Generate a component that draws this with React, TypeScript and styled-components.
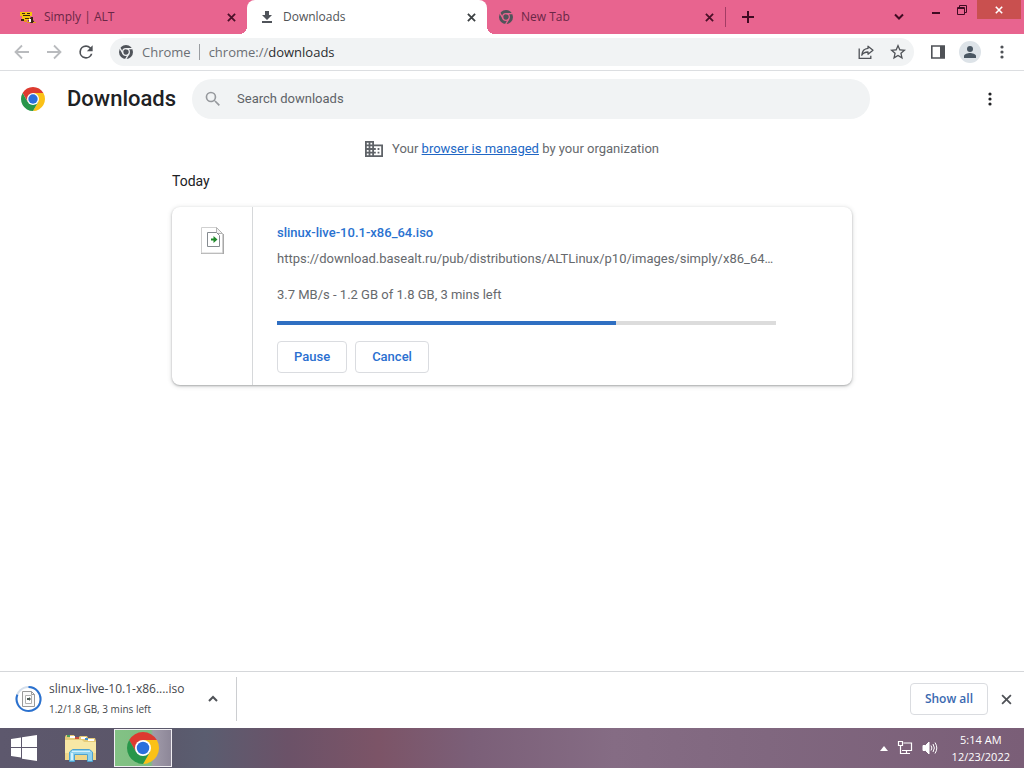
import React from 'react';
import styled, { createGlobalStyle, css } from 'styled-components';

const ui = '"Open Sans", "Noto Sans", sans-serif';
const roboto = 'Roboto, "Liberation Sans", sans-serif';

const GlobalStyle = createGlobalStyle`
  *, *::before, *::after { box-sizing: border-box; }
  body { margin: 0; background: #fff; font-family: ${roboto}; color: #202124; }
  button { font: inherit; color: inherit; background: none; border: 0; padding: 0; margin: 0; cursor: pointer; }
  svg { display: block; flex: none; }
`;

const Page = styled.div`
  display: flex;
  flex-direction: column;
  min-height: 100vh;
`;

/* ---------- Tab strip ---------- */

const TabStrip = styled.div`
  display: flex;
  height: 34px;
  background: #e8648f;
  font-family: ${ui};
`;

const TabItem = styled.div<{ $active?: boolean; $first?: boolean }>`
  position: relative;
  display: flex;
  align-items: center;
  flex: 0 1 ${p => (p.$first ? 247 : p.$active ? 240 : 238)}px;
  min-width: 0;
  padding: 0 10px 0 ${p => (p.$first ? 19 : 12)}px;
  gap: 8px;
  color: ${p => (p.$active ? '#505357' : '#6a2746')};
  ${p =>
    p.$active &&
    css`
      background: #fff;
      border-radius: 8px 8px 0 0;
      &::before,
      &::after {
        content: '';
        position: absolute;
        bottom: 0;
        width: 8px;
        height: 8px;
      }
      &::before {
        left: -8px;
        background: radial-gradient(circle at 0 0, transparent 8px, #fff 8px);
      }
      &::after {
        right: -8px;
        background: radial-gradient(circle at 100% 0, transparent 8px, #fff 8px);
      }
    `}
`;

const TabTitle = styled.span`
  flex: 1;
  font-size: 12px;
  line-height: 16px;
  white-space: nowrap;
  overflow: hidden;
`;

const TabClose = styled.button<{ $dark?: boolean }>`
  display: grid;
  place-items: center;
  width: 12px;
  height: 16px;
  color: ${p => (p.$dark ? '#3c4043' : '#4a1028')};
`;

const TabDivider = styled.span`
  align-self: center;
  width: 1px;
  height: 20px;
  background: #a33c64;
`;

const StripButton = styled.button`
  display: grid;
  place-items: center;
  align-self: center;
  width: 28px;
  height: 28px;
  margin-left: 8px;
  color: #3f0b22;
`;

const Spacer = styled.div`
  flex: 1;
`;

const WindowControls = styled.div`
  display: flex;
  margin: 0 3px 0 10px;
`;

const WindowButton = styled.button<{ $close?: boolean }>`
  display: grid;
  place-items: center;
  width: ${p => (p.$close ? 44 : 26)}px;
  height: 19px;
  margin-left: ${p => (p.$close ? 2 : 0)}px;
  color: ${p => (p.$close ? '#fff' : '#3f0b22')};
  background: ${p => (p.$close ? '#c9504f' : 'transparent')};
`;

/* ---------- Toolbar ---------- */

const Toolbar = styled.div`
  display: flex;
  align-items: center;
  height: 37px;
  padding: 0 12px;
  border-bottom: 1px solid #dcdee1;
  font-family: ${ui};
`;

const IconButton = styled.button<{ $muted?: boolean }>`
  display: grid;
  place-items: center;
  flex: none;
  width: 32px;
  height: 28px;
  color: ${p => (p.$muted ? '#b9bbbe' : '#4f5257')};
`;

const NavGroup = styled.div`
  display: flex;
  margin: 0 8px 0 -6px;
`;

const AddressBar = styled.div`
  display: flex;
  align-items: center;
  flex: 1;
  min-width: 0;
  height: 28px;
  padding: 0 0 0 9px;
  border-radius: 14px;
  background: #f1f3f4;
  font-size: 13px;
  line-height: 20px;
  color: #6b6f74;
`;

const SiteChip = styled.button`
  display: flex;
  align-items: center;
  gap: 9px;
  padding-right: 8px;
`;

const AddressDivider = styled.span`
  width: 1px;
  height: 16px;
  margin-right: 9px;
  background: #9a9da1;
`;

const AddressText = styled.div`
  flex: 1;
  outline: 0;
  white-space: nowrap;
  strong { font-weight: 400; color: #2b2d30; }
`;

const ToolGroup = styled.div`
  display: flex;
  margin: 0 -6px 0 8px;
`;

const Avatar = styled.span`
  display: grid;
  place-items: center;
  width: 22px;
  height: 22px;
  border-radius: 50%;
  background: #dde3e8;
`;

/* ---------- Downloads page ---------- */

const Header = styled.header`
  display: flex;
  align-items: center;
  height: 56px;
  padding: 0 18px 0 21px;
`;

const Title = styled.h1`
  margin: 0 16px 0 22px;
  font-size: 22px;
  line-height: 32px;
  font-weight: 500;
`;

const SearchField = styled.label`
  display: flex;
  align-items: center;
  gap: 15px;
  flex: 0 1 678px;
  height: 40px;
  padding: 0 12px;
  border-radius: 20px;
  background: #f1f3f4;
  color: #96999d;
`;

const SearchInput = styled.input`
  flex: 1;
  min-width: 0;
  border: 0;
  padding: 0;
  outline: 0;
  background: transparent;
  font: 13px/20px ${roboto};
  color: #202124;
  &::placeholder { color: #5f6368; opacity: 1; }
`;

const Main = styled.main`
  flex: 1;
  display: flex;
  flex-direction: column;
`;

const ManagedNote = styled.p`
  display: flex;
  align-items: center;
  justify-content: center;
  gap: 9px;
  margin: 12px 0 0;
  font-size: 13px;
  line-height: 20px;
  color: #66696d;
  a { color: #2167c5; }
`;

const List = styled.section`
  width: 100%;
  max-width: 680px;
  margin: 0 auto;
`;

const DateHeading = styled.h2`
  margin: 12px 0 16px;
  font-size: 14px;
  line-height: 20px;
  font-weight: 400;
`;

const Card = styled.article`
  display: flex;
  min-height: 178px;
  border-radius: 8px;
  background: #fff;
  box-shadow: 0 1px 2px rgba(60, 64, 67, 0.35), 0 1px 4px 1px rgba(60, 64, 67, 0.15);
`;

const FileCell = styled.div`
  display: flex;
  justify-content: center;
  flex: 0 0 81px;
  padding-top: 19px;
  border-right: 1px solid #d6d8da;
`;

const Details = styled.div`
  flex: 1;
  min-width: 0;
  padding: 16px 76px 12px 24px;
  font-size: 13px;
  line-height: 20px;
  color: #66696d;
`;

const FileLink = styled.a`
  display: block;
  font-weight: 500;
  color: #2a72d0;
  text-decoration: none;
`;

const SourceUrl = styled.div`
  margin-top: 6px;
  white-space: nowrap;
  overflow: hidden;
  text-overflow: ellipsis;
`;

const Status = styled.div`
  margin-top: 16px;
`;

const Progress = styled.progress`
  display: block;
  appearance: none;
  width: 100%;
  height: 4px;
  margin: 16px 0;
  border: 0;
  &::-webkit-progress-bar { background: #dcdcdc; }
  &::-webkit-progress-value { background: #2f6fc2; }
`;

const Actions = styled.div`
  display: flex;
  gap: 8px;
`;

const OutlineButton = styled.button`
  height: 32px;
  padding: 0 16px;
  border: 1px solid #dadce0;
  border-radius: 4px;
  font-size: 13px;
  line-height: 20px;
  font-weight: 500;
  color: #2a6fd0;
`;

/* ---------- Download shelf ---------- */

const Shelf = styled.footer`
  display: flex;
  align-items: center;
  height: 57px;
  padding: 0 9px 2px 15px;
  border-top: 1px solid #d5d7da;
  font-family: ${ui};
`;

const ShelfItem = styled.button`
  display: flex;
  align-items: center;
  gap: 7px;
  min-width: 182px;
  text-align: left;
`;

const ShelfName = styled.div`
  font-size: 12px;
  line-height: 20px;
  color: #45484c;
`;

const ShelfStatus = styled.div`
  font-size: 10px;
  line-height: 20px;
  color: #45484c;
`;

const ShelfDivider = styled.span`
  width: 1px;
  height: 44px;
  margin-left: 7px;
  background: #ccced1;
`;

const ShowAll = styled(OutlineButton)`
  padding: 0 14px;
  margin-right: 9px;
  font-size: 12px;
  font-weight: 600;
  color: #3a69b0;
`;

const CloseShelf = styled.button`
  display: grid;
  place-items: center;
  width: 18px;
  height: 24px;
  color: #4f5257;
`;

/* ---------- Taskbar ---------- */

const Taskbar = styled.nav`
  display: flex;
  align-items: center;
  height: 40px;
  padding: 0 14px 0 0;
  background: linear-gradient(90deg, #5d586d 0%, #5b5669 14%, #5a5d70 20%, #6b5268 28%, #7c5467 37%, #7b5f78 46%, #856c84 60%, #80677f 75%, #7a5e77 100%);
  color: #fff;
  font-family: ${ui};
`;

const TaskButton = styled.button<{ $running?: boolean }>`
  display: grid;
  place-items: center;
  width: ${p => (p.$running ? 58 : 48)}px;
  height: 38px;
  ${p =>
    p.$running &&
    css`
      margin-left: 9px;
      border: 1px solid #f0eef2;
      background: linear-gradient(90deg, #83c285 0%, #7dbd81 64%, #a19baa 68%, #8d8798 100%);
    `}
`;

const Explorer = styled(TaskButton)`
  margin-left: 9px;
`;

const Tray = styled.div`
  display: flex;
  align-items: center;
  gap: 9px;
  margin-right: 14px;
`;

const Clock = styled.time`
  font-size: 11px;
  line-height: 17px;
  text-align: center;
`;

/* ---------- Icons ---------- */

const Cross = ({ size = 9, width = 2 }: { size?: number; width?: number }) => (
  <svg width={size} height={size} viewBox="0 0 10 10" stroke="currentColor" strokeWidth={width} fill="none">
    <path d="M1 1l8 8M9 1l-8 8" />
  </svg>
);

const ChromeLogo = ({ size }: { size: number }) => (
  <svg width={size} height={size} viewBox="2 2 44 44">
    <path fill="#dd3b30" d="M24 13H43.05A22 22 0 0 0 4.95 13L14.47 29.5 24 24z" />
    <path fill="#fbc117" d="M43.05 13A22 22 0 0 1 24 46L33.53 29.5 24 13z" />
    <path fill="#28964a" d="M24 46A22 22 0 0 1 4.95 13L14.47 29.5 24 32 33.53 29.5z" />
    <circle cx="24" cy="24" r="11" fill="#fff" />
    <circle cx="24" cy="24" r="8.6" fill="#2b6fdc" />
  </svg>
);

const ChromeMono = ({ gap }: { gap: string }) => (
  <svg width="14" height="14" viewBox="2 2 44 44">
    <circle cx="24" cy="24" r="22" fill="#50545a" />
    <g fill="none" stroke={gap} strokeWidth="4">
      <path d="M24 13.5H45M33.1 29.2L22.6 47.4M14.9 29.2L4.4 11" />
      <circle cx="24" cy="24" r="10.5" />
    </g>
  </svg>
);

const SimplyFavicon = () => (
  <svg width="17" height="15" viewBox="0 0 17 15">
    <path fill="#f4c20d" d="M1 2h12v4H1zM3 6h8v4H3z" />
    <path fill="#3a2410" d="M3 3h3v1H3zM8 3h3v1H8zM4 5h7v1H4zM2 9h3v2H2zM6 8h4v1H6zM12 7h2v3l2 3h-4l-3-2z" />
    <path fill="#fff" d="M10 9h2v3h-2z" />
    <path fill="#e59a16" d="M5 10h3v2H5zM8 12h3v1H8zM14 12h3v1h-3z" />
  </svg>
);

const DownloadGlyph = () => (
  <svg width="16" height="16" viewBox="0 0 16 16" fill="#50545a">
    <path d="M6 2h4v4h3l-5 5-5-5h3zM3 12h10v2H3z" />
  </svg>
);

const ArrowIcon = ({ flip }: { flip?: boolean }) => (
  <svg width="16" height="16" viewBox="0 0 16 16" fill="none" stroke="currentColor" strokeWidth="1.8">
    <path d={flip ? 'M1 8h13M8 1.5L14.5 8 8 14.5' : 'M15 8H2M8 1.5L1.5 8 8 14.5'} />
  </svg>
);

const ReloadIcon = () => (
  <svg width="20" height="20" viewBox="0 0 24 24" fill="currentColor">
    <path d="M17.65 6.35A7.96 7.96 0 0 0 12 4a8 8 0 1 0 7.73 10h-2.08A6 6 0 1 1 12 6c1.66 0 3.14.69 4.22 1.78L13 11h7V4z" />
  </svg>
);

const ShareIcon = () => (
  <svg width="16" height="16" viewBox="0 0 16 16" fill="none" stroke="currentColor" strokeWidth="1.3">
    <path d="M1.2 4.5v9.8h11.6v-2.5" />
    <path d="M10 2.2l5 4-5 4V8C7 8 5 9 3.8 11.2 4.1 7.5 6.5 4.7 10 4.4z" strokeLinejoin="round" />
  </svg>
);

const StarIcon = () => (
  <svg width="16" height="16" viewBox="2 2 20 20" fill="currentColor">
    <path d="M22 9.24l-7.19-.62L12 2 9.19 8.63 2 9.24l5.46 4.73L5.82 21 12 17.27 18.18 21l-1.63-7.03zM12 15.4l-3.76 2.27 1-4.28-3.32-2.88 4.38-.38L12 6.1l1.71 4.04 4.38.38-3.32 2.88 1 4.28z" />
  </svg>
);

const SidePanelIcon = () => (
  <svg width="14" height="14" viewBox="0 0 14 14">
    <path fill="none" stroke="currentColor" strokeWidth="1.6" d="M.8 1h12.4v12H.8z" />
    <path fill="currentColor" d="M9 1h4.5v12H9z" />
  </svg>
);

const PersonIcon = () => (
  <svg width="12" height="12" viewBox="0 0 12 12" fill="#4a5763">
    <circle cx="6" cy="3" r="3" />
    <path d="M0 12v-2c0-2 4-3 6-3s6 1 6 3v2z" />
  </svg>
);

const DotsIcon = () => (
  <svg width="4" height="14" viewBox="0 0 4 14" fill="currentColor">
    <circle cx="2" cy="2" r="1.6" />
    <circle cx="2" cy="7" r="1.6" />
    <circle cx="2" cy="12" r="1.6" />
  </svg>
);

const PageMenu = styled(IconButton)`
  color: #202124;
`;

const SearchIcon = () => (
  <svg width="18" height="18" viewBox="1 1 22 22" fill="currentColor">
    <path d="M15.5 14h-.79l-.28-.27A6.47 6.47 0 0 0 16 9.5 6.5 6.5 0 1 0 9.5 16c1.61 0 3.09-.59 4.23-1.57l.27.28v.79l5 4.99L20.49 19zm-6 0a4.5 4.5 0 1 1 0-9 4.5 4.5 0 0 1 0 9z" />
  </svg>
);

const BusinessIcon = () => (
  <svg width="18" height="18" viewBox="2 2 20 20" fill="#5f6368">
    <path d="M12 7V3H2v18h20V7zM6 19H4v-2h2zm0-4H4v-2h2zm0-4H4V9h2zm0-4H4V5h2zm4 12H8v-2h2zm0-4H8v-2h2zm0-4H8V9h2zm0-4H8V5h2zm10 12h-8v-2h2v-2h-2v-2h2v-2h-2V9h8zm-2-8h-2v2h2zm0 4h-2v2h2z" />
  </svg>
);

const FileIcon = () => (
  <svg width="25" height="30" viewBox="0 0 25 30">
    <path fill="#a8a8a8" d="M1 28h23V8h-2v19H1z" />
    <path fill="#fff" stroke="#d0d0d0" d="M1.500 1.500h15l6 6v19.500h-21z" />
    <path fill="#f1f1f1" stroke="#b5b5b5" d="M16.500 1.500v6h6z" />
    <path fill="#fff" stroke="#858b90" d="M7.500 6.500h9l3 3v11h-12z" />
    <path fill="#1f8a2b" d="M11 12.500h2.500V10l4 3.500-4 3.500v-2.500H11z" />
  </svg>
);

const ShelfProgress = () => (
  <svg width="27" height="28" viewBox="0 0 27 28">
    <g fill="none" strokeWidth="2">
      <circle cx="13.5" cy="14" r="12" stroke="#d5dfeb" />
      <path stroke="#2a71cf" d="M13.5 2A12 12 0 1 1 2.4 9.500" />
    </g>
    <path fill="#fafafa" stroke="#9a9a9a" d="M7.500 6.500h9l3 3v12h-12z" />
    <path fill="#fff" stroke="#b0b0b0" d="M10.500 10.500h6v8h-6z" />
    <path fill="#4d5b55" d="M12 13h2v-1l2 2-2 2v-1h-2z" />
    <path stroke="#9a9a9a" d="M16.500 6.500v3h3" fill="none" />
  </svg>
);

const WindowsLogo = () => (
  <svg width="26" height="26" viewBox="0 0 26 26" fill="#fff">
    <path d="M0 4l10-1.500V12H0zM11 2.300L26 0v12H11zM0 13h10v9.500L0 21zM11 13h15v13l-15-2.300z" />
  </svg>
);

const FolderIcon = () => (
  <svg width="34" height="30" viewBox="0 0 34 30">
    <path fill="#e6cb78" d="M1 4l1-2h8l1 2h4l1-1h7l1 2h7l1 3v18H1z" />
    <path fill="#4ba05c" d="M3 2h3v2H3z" />
    <path fill="#c8503c" d="M11 4h4v2h-4z" />
    <path fill="#fff" d="M6 3h5v2H6zM17 4h5v2h-5zM24 6h6v2h-6z" />
    <path fill="#3f8fca" d="M21 5h3v2h-3z" />
    <path fill="#f7e7a5" d="M1 7h17l2 2h12v18H1z" />
    <path fill="#efd78a" d="M1 20h31v7H1z" />
    <path fill="#8ed2ef" stroke="#4fa3cf" d="M5.500 28.500V19l3-2.500h17l3 2.500v9.500h-5v-7h-13v7z" />
    <path fill="#d5f1fb" d="M8 18h18v1H8zM7 20h2v7H7z" />
  </svg>
);

const NetworkIcon = () => (
  <svg width="16" height="16" viewBox="0 0 16 16" fill="none" stroke="#fff" strokeWidth="1.2">
    <path d="M6.500 3h8v7.500H5M9.500 10.500V13M6 13.500h7M1.500 1.500h4v4h-4zM3.500 5.500v8H6" />
  </svg>
);

const SpeakerIcon = () => (
  <svg width="16" height="16" viewBox="0 0 16 16" fill="none" stroke="#fff">
    <path fill="#fff" d="M1 5.500h2.500L7 2v12l-3.500-3.500H1z" />
    <path d="M9 5.500q1.800 2.500 0 5M11 4q2.800 4 0 8M13 2.500q3.600 5.500 0 11" />
  </svg>
);

export default function App() {
  return (
    <Page>
      <GlobalStyle />
      <TabStrip>
        <TabItem $first>
          <SimplyFavicon />
          <TabTitle>Simply | ALT</TabTitle>
          <TabClose aria-label="Close tab"><Cross /></TabClose>
        </TabItem>
        <TabItem $active>
          <DownloadGlyph />
          <TabTitle>Downloads</TabTitle>
          <TabClose $dark aria-label="Close tab"><Cross /></TabClose>
        </TabItem>
        <TabItem>
          <ChromeMono gap="#e8648f" />
          <TabTitle>New Tab</TabTitle>
          <TabClose aria-label="Close tab"><Cross /></TabClose>
        </TabItem>
        <TabDivider />
        <StripButton aria-label="New tab">
          <svg width="12" height="12" viewBox="0 0 12 12" stroke="currentColor" strokeWidth="2"><path d="M6 0v12M0 6h12" /></svg>
        </StripButton>
        <Spacer />
        <StripButton aria-label="Search tabs">
          <svg width="10" height="8" viewBox="0 0 10 8" fill="none" stroke="currentColor" strokeWidth="2"><path d="M1 1.5l4 4 4-4" /></svg>
        </StripButton>
        <WindowControls>
          <WindowButton aria-label="Minimize">
            <svg width="8" height="14" viewBox="0 0 8 14" fill="currentColor"><path d="M0 9h8v2H0z" /></svg>
          </WindowButton>
          <WindowButton aria-label="Restore">
            <svg width="10" height="10" viewBox="0 0 10 10" fill="none" stroke="currentColor"><path d="M.5 2.5h7v7h-7zM2.5 2.5v-2h7v7h-2M1 3.5h6" /></svg>
          </WindowButton>
          <WindowButton $close aria-label="Close"><Cross size={8} /></WindowButton>
        </WindowControls>
      </TabStrip>

      <Toolbar>
        <NavGroup>
          <IconButton $muted aria-label="Back"><ArrowIcon /></IconButton>
          <IconButton $muted aria-label="Forward"><ArrowIcon flip /></IconButton>
          <IconButton aria-label="Reload"><ReloadIcon /></IconButton>
        </NavGroup>
        <AddressBar>
          <SiteChip><ChromeMono gap="#f1f3f4" />Chrome</SiteChip>
          <AddressDivider />
          <AddressText role="textbox" aria-label="Address" tabIndex={0}>chrome://<strong>downloads</strong></AddressText>
          <IconButton aria-label="Share"><ShareIcon /></IconButton>
          <IconButton aria-label="Bookmark"><StarIcon /></IconButton>
        </AddressBar>
        <ToolGroup>
          <IconButton aria-label="Side panel"><SidePanelIcon /></IconButton>
          <IconButton aria-label="Profile"><Avatar><PersonIcon /></Avatar></IconButton>
          <IconButton aria-label="Menu"><DotsIcon /></IconButton>
        </ToolGroup>
      </Toolbar>

      <Main>
        <Header>
          <ChromeLogo size={24} />
          <Title>Downloads</Title>
          <SearchField>
            <SearchIcon />
            <SearchInput type="search" placeholder="Search downloads" aria-label="Search downloads" />
          </SearchField>
          <Spacer />
          <PageMenu aria-label="More actions"><DotsIcon /></PageMenu>
        </Header>
        <ManagedNote>
          <BusinessIcon />
          <span>Your <a href="#managed">browser is managed</a> by your organization</span>
        </ManagedNote>
        <List>
          <DateHeading>Today</DateHeading>
          <Card>
            <FileCell><FileIcon /></FileCell>
            <Details>
              <FileLink href="#file">slinux-live-10.1-x86_64.iso</FileLink>
              <SourceUrl>https://download.basealt.ru/pub/distributions/ALTLinux/p10/images/simply/x86_64…</SourceUrl>
              <Status>3.7 MB/s - 1.2 GB of 1.8 GB, 3 mins left</Status>
              <Progress value={68} max={100} aria-label="Download progress" />
              <Actions>
                <OutlineButton>Pause</OutlineButton>
                <OutlineButton>Cancel</OutlineButton>
              </Actions>
            </Details>
          </Card>
        </List>
      </Main>

      <Shelf>
        <ShelfItem>
          <ShelfProgress />
          <div>
            <ShelfName>slinux-live-10.1-x86....iso</ShelfName>
            <ShelfStatus>1.2/1.8 GB, 3 mins left</ShelfStatus>
          </div>
        </ShelfItem>
        <IconButton aria-label="Download options">
          <svg width="10" height="8" viewBox="0 0 10 8" fill="none" stroke="currentColor" strokeWidth="2"><path d="M1 6l4-4 4 4" /></svg>
        </IconButton>
        <ShelfDivider />
        <Spacer />
        <ShowAll>Show all</ShowAll>
        <CloseShelf aria-label="Close downloads bar"><Cross size={11} width={1.6} /></CloseShelf>
      </Shelf>

      <Taskbar>
        <TaskButton aria-label="Start"><WindowsLogo /></TaskButton>
        <Explorer aria-label="File Explorer"><FolderIcon /></Explorer>
        <TaskButton $running aria-label="Google Chrome"><ChromeLogo size={32} /></TaskButton>
        <Spacer />
        <Tray>
          <svg width="8" height="5" viewBox="0 0 8 5" fill="#fff"><path d="M4 0l4 5H0z" /></svg>
          <NetworkIcon />
          <SpeakerIcon />
        </Tray>
        <Clock>5:14 AM<br />12/23/2022</Clock>
      </Taskbar>
    </Page>
  );
}
